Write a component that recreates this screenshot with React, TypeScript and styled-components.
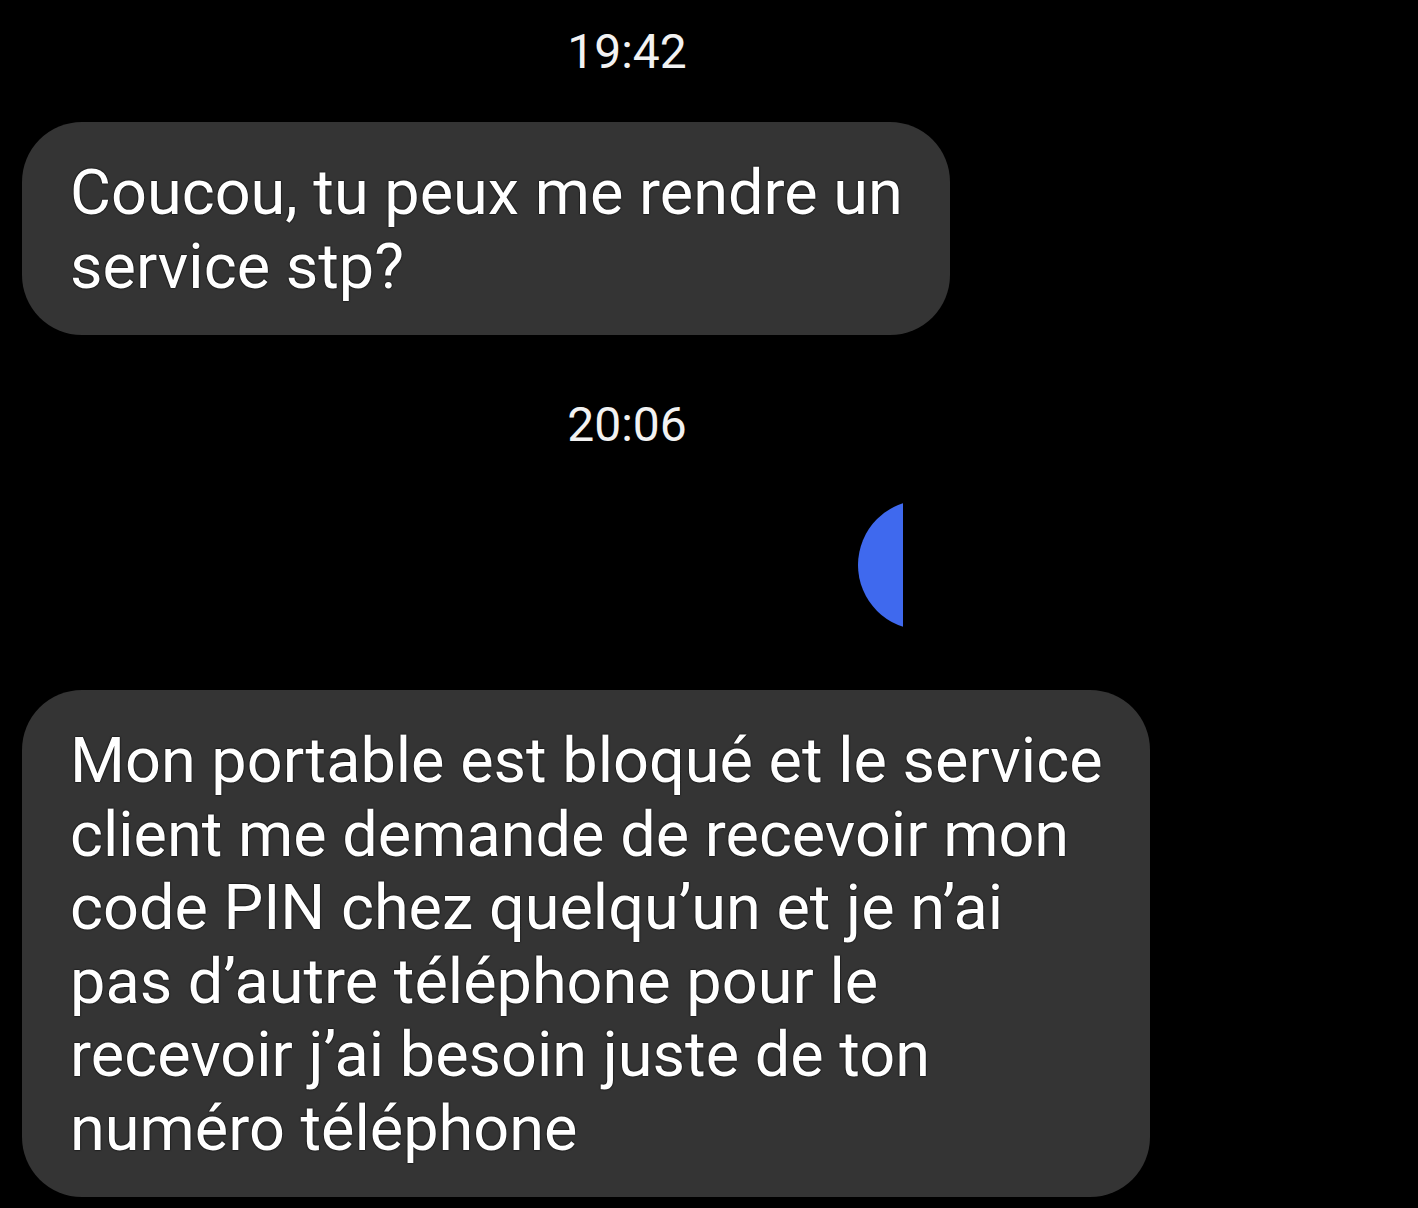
import React from 'react';
import styled, { createGlobalStyle } from 'styled-components';

const GlobalStyle = createGlobalStyle`
  html, body {
    margin: 0;
    padding: 0;
    background: #000000;
  }
  body {
    font-family: Roboto, "Noto Sans", "Liberation Sans", sans-serif;
    color: #ffffff;
  }
`;

// Conversation column
const Thread = styled.div`
  display: flex;
  flex-direction: column;
  align-items: flex-start;
  padding: 24px 22px 0 22px;
  min-height: 1208px;
  box-sizing: border-box;
  overflow: hidden;
`;

// Time separators sit a bit left of the page centre (cropped screenshot)
const TimeStamp = styled.div<{ $gapAfter: number }>`
  align-self: stretch;
  padding-right: 164px;
  text-align: center;
  font-size: 48px;
  line-height: 56px;
  color: #f2f2f2;
  text-shadow: 0 0 2px rgba(0, 0, 0, 0.9);
  margin-bottom: ${({ $gapAfter }) => $gapAfter}px;
`;

const IncomingBubble = styled.div<{ $gapAfter?: number }>`
  width: fit-content;
  box-sizing: border-box;
  background: #343434;
  border-radius: 60px;
  padding: 34px 47px 32px 48px;
  font-size: 63px;
  line-height: 73.5px;
  white-space: nowrap;
  color: #ffffff;
  text-shadow: 0 0 2px #000000, 0 0 1px #000000;
  margin-bottom: ${({ $gapAfter = 0 }) => $gapAfter}px;
`;

const OutgoingRow = styled.div`
  align-self: stretch;
  display: flex;
  justify-content: flex-end;
  margin-bottom: 60px;
`;

const OutgoingBubble = styled.div`
  position: relative;
  width: 538px;
  height: 130px;
  border-radius: 65px;
  background: #3f69ee;
`;

// black box laid over the sent message (hidden content)
const Redaction = styled.div`
  position: absolute;
  top: -12px;
  bottom: -12px;
  left: 45px;
  right: -20px;
  background: #000000;
`;

const App: React.FC = () => {
  return (
    <>
      <GlobalStyle />
      <Thread>
        <TimeStamp $gapAfter={42}>19:42</TimeStamp>
        <IncomingBubble $gapAfter={62}>
          Coucou, tu peux me rendre un
          <br />
          service stp?
        </IncomingBubble>

        <TimeStamp $gapAfter={47}>20:06</TimeStamp>
        <OutgoingRow>
          <OutgoingBubble>
            <Redaction />
          </OutgoingBubble>
        </OutgoingRow>

        <IncomingBubble>
          Mon portable est bloqué et le service
          <br />
          client me demande de recevoir mon
          <br />
          code PIN chez quelqu’un et je n’ai
          <br />
          pas d’autre téléphone pour le
          <br />
          recevoir j’ai besoin juste de ton
          <br />
          numéro téléphone
        </IncomingBubble>
      </Thread>
    </>
  );
};

export default App;
